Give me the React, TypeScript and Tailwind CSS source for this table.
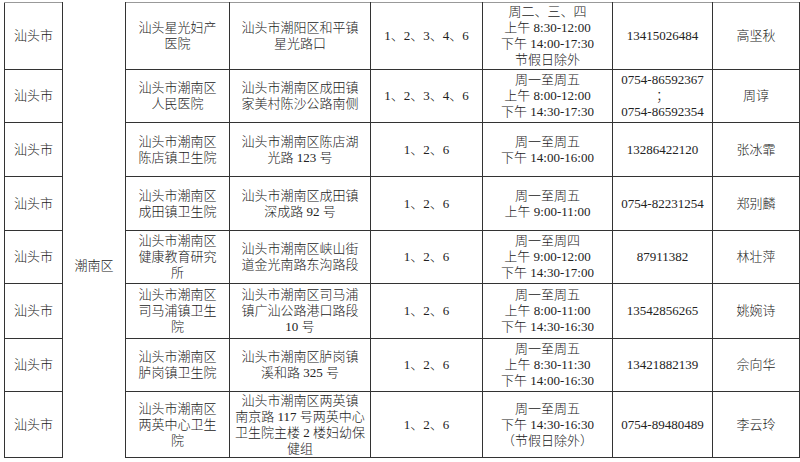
const rows = [
  {
    h: "h-[67px]",
    name: ["汕头星光妇产", "医院"],
    addr: ["汕头市潮阳区和平镇", "星光路口"],
    types: "1、2、3、4、6",
    time: ["周二、三、四", "上午 8:30-12:00", "下午 14:00-17:30", "节假日除外"],
    phone: ["13415026484"],
    contact: "高坚秋",
  },
  {
    h: "h-[53px]",
    name: ["汕头市潮南区", "人民医院"],
    addr: ["汕头市潮南区成田镇", "家美村陈沙公路南侧"],
    types: "1、2、3、4、6",
    time: ["周一至周五", "上午 8:00-12:00", "下午 14:30-17:30"],
    phone: ["0754-86592367", "；", "0754-86592354"],
    contact: "周谆",
  },
  {
    h: "h-[54px]",
    name: ["汕头市潮南区", "陈店镇卫生院"],
    addr: ["汕头市潮南区陈店湖", "光路 123 号"],
    types: "1、2、6",
    time: ["周一至周五", "下午 14:00-16:00"],
    phone: ["13286422120"],
    contact: "张冰霏",
  },
  {
    h: "h-[54px]",
    name: ["汕头市潮南区", "成田镇卫生院"],
    addr: ["汕头市潮南区成田镇", "深成路 92 号"],
    types: "1、2、6",
    time: ["周一至周五", "上午 9:00-11:00"],
    phone: ["0754-82231254"],
    contact: "郑别麟",
  },
  {
    h: "h-[53px]",
    name: ["汕头市潮南区", "健康教育研究", "所"],
    addr: ["汕头市潮南区峡山街", "道金光南路东沟路段"],
    types: "1、2、6",
    time: ["周一至周四", "上午 9:00-12:00", "下午 14:30-17:00"],
    phone: ["87911382"],
    contact: "林壮萍",
  },
  {
    h: "h-[55px]",
    name: ["汕头市潮南区", "司马浦镇卫生", "院"],
    addr: ["汕头市潮南区司马浦", "镇广汕公路港口路段", "10 号"],
    types: "1、2、6",
    time: ["周一至周五", "上午 8:00-11:00", "下午 14:30-16:30"],
    phone: ["13542856265"],
    contact: "姚婉诗",
  },
  {
    h: "h-[53px]",
    name: ["汕头市潮南区", "胪岗镇卫生院"],
    addr: ["汕头市潮南区胪岗镇", "溪和路 325 号"],
    types: "1、2、6",
    time: ["周一至周五", "上午 8:30-11:30", "下午 14:00-16:30"],
    phone: ["13421882139"],
    contact: "佘向华",
  },
  {
    h: "h-[66px]",
    name: ["汕头市潮南区", "两英中心卫生", "院"],
    addr: ["汕头市潮南区两英镇", "南京路 117 号两英中心", "卫生院主楼 2 楼妇幼保", "健组"],
    types: "1、2、6",
    time: ["周一至周五", "下午 14:30-16:30", "（节假日除外）"],
    phone: ["0754-89480489"],
    contact: "李云玲",
  },
]

function Lines({ items }: { items: string[] }) {
  return (
    <>
      {items.map((t, i) => (
        <div key={i}>{t}</div>
      ))}
    </>
  )
}

const cell = "border border-[#333] text-center align-middle p-0"

export default function App() {
  return (
    <div
      className="w-[800px] h-[462px] bg-white overflow-hidden pl-[4px] pt-[2px] text-[13px] leading-[16px] text-[#222] font-light"
      style={{ fontFamily: '"Liberation Serif", "Noto Sans CJK SC", serif' }}
    >
      <table className="table-fixed border-collapse w-[795px]">
        <colgroup>
          <col className="w-[58px]" />
          <col className="w-[63px]" />
          <col className="w-[104px]" />
          <col className="w-[141px]" />
          <col className="w-[112px]" />
          <col className="w-[130px]" />
          <col className="w-[100px]" />
          <col className="w-[87px]" />
        </colgroup>
        <tbody>
          {rows.map((r, i) => {
            const c = `${cell} ${i === 0 ? "border-t-[#999]" : ""}`
            return (
              <tr key={i} className={r.h}>
                <td className={c}>汕头市</td>
                {i === 0 && (
                  <td
                    rowSpan={8}
                    className="border-x border-[#333] border-y-0 text-center align-top p-0 pt-[255px]"
                  >
                    潮南区
                  </td>
                )}
                <td className={c}>
                  <Lines items={r.name} />
                </td>
                <td className={c}>
                  <Lines items={r.addr} />
                </td>
                <td className={c}>{r.types}</td>
                <td className={c}>
                  <Lines items={r.time} />
                </td>
                <td className={c}>
                  <Lines items={r.phone} />
                </td>
                <td className={c}>{r.contact}</td>
              </tr>
            )
          })}
        </tbody>
      </table>
    </div>
  )
}
